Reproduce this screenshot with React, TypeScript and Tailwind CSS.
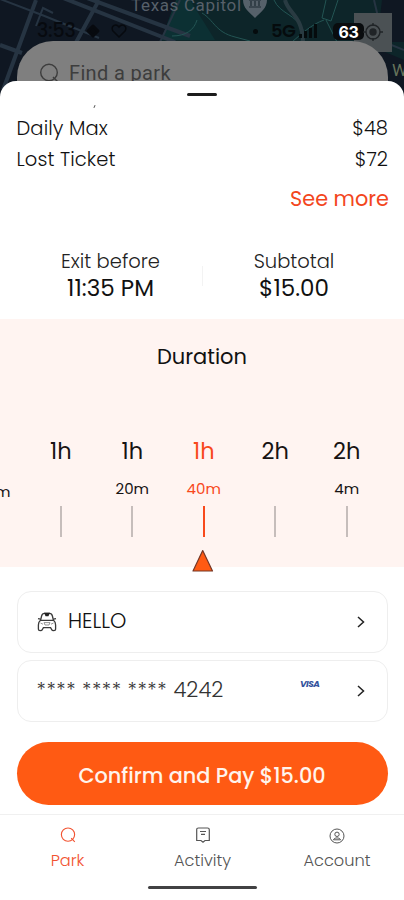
import React from "react";

const rates = [
  { label: "Daily Max", price: "$48" },
  { label: "Lost Ticket", price: "$72" },
];

const durations = [
  { hours: "", minutes: "40m" },
  { hours: "1h", minutes: "" },
  { hours: "1h", minutes: "20m" },
  { hours: "1h", minutes: "40m", active: true },
  { hours: "2h", minutes: "" },
  { hours: "2h", minutes: "4m" },
];

const MapBackground = () => (
  <svg
    className="absolute inset-0 h-full w-full"
    viewBox="0 0 404 110"
    fill="none"
    preserveAspectRatio="none"
  >
    <rect width="404" height="110" fill="#0f1722" />
    <path d="M178 0H382L377 42H404V60L366 44H290L160 42Z" fill="#0d2529" />
    <path d="M176 0L161 40H215L190 0Z" fill="#0c3033" />
    <g stroke="#263442" strokeWidth="4">
      <path d="M36 0L3 90M99 0L73 48M53 -6L175 42M68 -9L190 36M0 45L22 53" />
    </g>
    <g stroke="#263442" strokeWidth="2">
      <path d="M0 -1L42 15L99 38M53 13L43 8L36 26M180 0L160 42M374 0L384 42L404 50" />
    </g>
    <g stroke="#235453" strokeWidth="1">
      <path d="M172 36C186 36 194 30 197 20M274 0C280 14 296 14 303 30L301 42M326 0L322 18L331 21L338 0M324 20C312 24 300 35 292 42M202 13C214 20 215 32 235 37L250 41M326 20L337 42" />
    </g>
    <path d="M285 0C288 13 302 15 303 41" stroke="#293b42" strokeWidth="4" />
  </svg>
);

const SearchIcon = ({ className }: { className?: string }) => (
  <svg className={className} viewBox="0 0 20 20" fill="none" stroke="currentColor" strokeWidth="1.4">
    <circle cx="10" cy="9.5" r="8.3" />
    <path d="M14 14L18.5 18.5" />
  </svg>
);

const Chevron = () => (
  <svg className="h-3 w-2" viewBox="0 0 8 12" fill="none" stroke="#222" strokeWidth="1.5">
    <path d="M1 1L6.5 6L1 11" />
  </svg>
);

const CarIcon = () => (
  <svg className="h-5 w-5" viewBox="0 0 20 20" fill="none" stroke="#3a3a3a" strokeWidth="1.3">
    <path d="M3.5 8.5L4.6 4C5 2.2 6 1.4 7.5 1.4H12.5C14 1.4 15 2.2 15.4 4L16.5 8.5" />
    <path d="M8 1.4H12L11 3.6H9Z" fill="#222" stroke="#222" />
    <path d="M1 6.6L3.5 7.2M19 6.6L16.5 7.2" />
    <path d="M3.5 8.3H16.5C18 9.5 18.6 11 18.6 13V17.2C18.6 19 15.2 19 14.6 17.4L13.6 15.6H6.4L5.4 17.4C4.8 19 1.4 19 1.4 17.2V13C1.4 11 2 9.5 3.5 8.3Z" />
    <path d="M3.5 11L6 12.2M16.5 11L14 12.2M7 10.6H13L12 13H8Z" stroke="#888" strokeWidth=".9" />
  </svg>
);

const Header = () => (
  <header className="relative h-[110px] w-full shrink-0 overflow-hidden">
    <MapBackground />
    <span className="absolute top-[-7px] left-[131px] font-[Roboto] text-[17px] leading-6 tracking-[0.65px] text-[#57606a]">
      Texas Capitol
    </span>
    <svg className="absolute top-0 left-[243px] h-[19px] w-6" viewBox="0 0 24 19">
      <path d="M0 0H24C24 8 18 12 12 18C6 12 0 8 0 0Z" fill="#56616a" />
      <path d="M6 7H18M8 6V1M12 6V1M16 6V1M6 0H18" stroke="#1d2a32" strokeWidth="1.2" />
    </svg>
    <div className="absolute top-[13px] left-[354px] h-[39px] w-[38px] bg-[#4b5154]" />
    <div className="absolute top-[41px] left-[17px] flex h-[90px] w-[371px] rounded-[36px] bg-[#7f7f7f] pt-[19px] pl-[22px] text-[#3d3d3d]">
      <SearchIcon className="mt-[3px] h-5 w-5" />
      <span className="ml-[10px] font-[Roboto] text-[20px] leading-[26px] tracking-[0.35px]">
        Find a park
      </span>
    </div>
    <span className="absolute top-[19px] left-[37px] text-[19px] leading-6 font-medium tracking-[-0.2px] text-[#070a0f]">
      3:53
    </span>
    <svg className="absolute top-[23px] left-[85px] h-4 w-[42px]" viewBox="0 0 42 16" fill="none">
      <path d="M8 3L13 8L8 13L3 8Z" fill="#070a0f" stroke="#070a0f" strokeWidth="3" strokeLinejoin="round" />
      <path d="M34 14L28 8C25 3 31 0 34 4C37 0 43 3 40 8Z" stroke="#070a0f" strokeWidth="1.5" />
    </svg>
    <div className="absolute top-[29px] left-[253px] h-[5px] w-[5px] rounded-full bg-[#050b0d]" />
    <span className="absolute top-[19px] left-[271px] text-[18px] leading-6 font-semibold tracking-[-0.5px] text-[#050b0d]">
      5G
    </span>
    <svg className="absolute top-[24px] left-[299px] h-[14px] w-[20px]" viewBox="0 0 20 14" fill="#050b0d">
      <path d="M0 10H3V14H0ZM5 7H8V14H5ZM10 4H13V14H10ZM15 0H18V14H15Z" />
    </svg>
    <div className="absolute top-[23px] left-[333px] flex h-[17px] w-[31px] items-center justify-center rounded-[5px] bg-[#090c0e] font-[Inter] text-[16px] font-bold tracking-[-0.4px] text-white">
      63
    </div>
    <svg className="absolute top-[23px] left-[363px] h-[18px] w-5" viewBox="0 0 20 18" fill="none" stroke="#202427" strokeWidth="1.4">
      <circle cx="10" cy="9" r="7" />
      <circle cx="10" cy="9" r="3" fill="#202427" />
      <path d="M10 0V3M10 15V18M0 9H3M17 9H20" />
    </svg>
    <span className="absolute top-[58px] left-[392px] font-[Roboto] text-[17px] leading-6 text-[#66735a]">
      W
    </span>
  </header>
);

const Rates = () => (
  <section className="flex h-[131px] flex-col px-[16px] pt-px text-[19.5px] leading-[30.5px] font-light">
    {rates.map((rate) => (
      <div className="flex justify-between" key={rate.label}>
        <span className="ml-[0.5px] tracking-[0.1px]">{rate.label}</span>
        <span>{rate.price}</span>
      </div>
    ))}
    <button className="mt-[9px] -mr-px self-end text-[20.8px] font-normal text-[#f3461d]">
      See more
    </button>
  </section>
);

const Summary = () => (
  <section className="flex h-[75px] justify-center pt-1">
    <div className="w-[183px] text-center">
      <p className="text-[19.5px] leading-[27px] font-light text-[#222]">Exit before</p>
      <p className="text-[23px] leading-[27px]">11:35 PM</p>
    </div>
    <div className="mt-[18px] h-5 w-px bg-[#f3f3f3]" />
    <div className="w-[182px] text-center">
      <p className="text-[19.5px] leading-[27px] font-light text-[#222]">Subtotal</p>
      <p className="text-[23px] leading-[27px]">$15.00</p>
    </div>
  </section>
);

const DurationPicker = () => (
  <section className="relative h-[248px] bg-[#fff4f1]">
    <h2 className="pt-[23px] text-center text-[21px] leading-[30px]">Duration</h2>
    <div className="overflow-hidden pt-[64px]">
      <div className="-ml-[46.5px] flex w-[451px]">
        {durations.map((item, idx) => (
          <div
            className={`flex w-[71.5px] shrink-0 flex-col items-center ${item.active ? "text-[#f8491c]" : "text-[#171313]"}`}
            key={idx}
          >
            <span className="h-[30px] text-[22.5px] leading-[31px]">{item.hours}</span>
            <span
              className={`mt-[13px] h-5 text-[15px] leading-5 ${idx === 0 ? "relative top-[3px] left-1" : ""}`}
            >
              {item.minutes}
            </span>
            <span
              className={`mt-[7px] h-[31px] w-[2px] ${item.active ? "bg-[#f8491c]" : "bg-[#c6bdbb]"}`}
            />
          </div>
        ))}
      </div>
    </div>
    <svg className="absolute top-[230px] left-[191px] h-6 w-6" viewBox="0 0 24 24">
      <path d="M11.7 1.5L21.5 22H2Z" fill="#ff5a13" stroke="#753625" strokeWidth="1.2" strokeLinejoin="round" />
    </svg>
  </section>
);

const Payment = () => (
  <section className="flex flex-col px-[16.5px] pt-6">
    <button className="flex h-[62px] items-center rounded-[14px] border border-[#eeeeee] pr-[22px] pl-[19px]">
      <CarIcon />
      <span className="mb-[3px] ml-[11.5px] text-[20.8px] font-light">HELLO</span>
      <span className="ml-auto">
        <Chevron />
      </span>
    </button>
    <button className="mt-[7px] flex h-[62px] items-center rounded-[14px] border border-[#eeeeee] pr-[22px] pl-[19px]">
      <span className="mb-[3px] flex items-center font-light text-[#333]">
        <span className="w-[137px] text-left text-[20px] tracking-[0.5px] whitespace-nowrap">
          **** **** ****
        </span>
        <span className="text-[21px]">4242</span>
      </span>
      <span className="mb-3 ml-auto text-[9px] font-bold tracking-[-0.5px] text-[#34539d] italic">VISA</span>
      <span className="ml-[37px]">
        <Chevron />
      </span>
    </button>
    <button className="mt-[20px] h-[63px] rounded-full bg-[#ff5a13] pt-1 text-[20.8px] font-medium text-[#fff4ec]">
      Confirm and Pay $15.00
    </button>
  </section>
);

const BottomNav = () => (
  <nav className="mt-[9px] flex h-[86px] border-t border-[#f0f0f0] text-[16.2px] font-light text-[#555]">
    <div className="flex w-[135px] flex-col items-center pt-[12px] text-[#f25331]">
      <SearchIcon className="h-4 w-4" />
      <span className="mt-[6px] leading-6">Park</span>
    </div>
    <div className="flex w-[135px] flex-col items-center pt-[12px]">
      <svg className="h-4 w-4" viewBox="0 0 16 16" fill="none" stroke="currentColor" strokeWidth="1.2">
        <path d="M3.5 1H12.5C13.7 1 14.3 1.6 14.3 2.8V13.5H10L8 15.2L6 13.5H1.7V2.8C1.7 1.6 2.3 1 3.5 1ZM5 4.5H11M6 7.3H10" />
      </svg>
      <span className="mt-[6px] leading-6">Activity</span>
    </div>
    <div className="flex w-[134px] flex-col items-center pt-[13px]">
      <svg className="h-4 w-4" viewBox="0 0 16 16" fill="none" stroke="currentColor">
        <circle cx="8" cy="8" r="7" />
        <circle cx="8" cy="6.3" r="2.2" />
        <path d="M4.5 11.8C5 9.3 11 9.3 11.5 11.8Z" />
      </svg>
      <span className="mt-[5px] leading-6">Account</span>
    </div>
  </nav>
);

const App = () => {
  return (
    <div className="relative flex h-[900px] w-[404px] flex-col overflow-hidden bg-white font-[Poppins,Inter,sans-serif] text-[#111]">
      <Header />
      <main className="relative -mt-[29px] h-[819px] rounded-t-[16px] bg-white">
        <div className="flex h-[32px] flex-col items-center pt-[12px]">
          <div className="h-[3px] w-[30px] rounded-full bg-[#1c1c1c]" />
          <span className="mt-[9px] mr-[216px] h-[3px] w-px rotate-[25deg] bg-[#555]" />
        </div>
        <Rates />
        <Summary />
        <DurationPicker />
        <Payment />
        <BottomNav />
      </main>
      <div className="absolute bottom-[11px] left-[148px] h-[3px] w-[109px] rounded-full bg-[#414143]" />
    </div>
  );
};

export default App;
